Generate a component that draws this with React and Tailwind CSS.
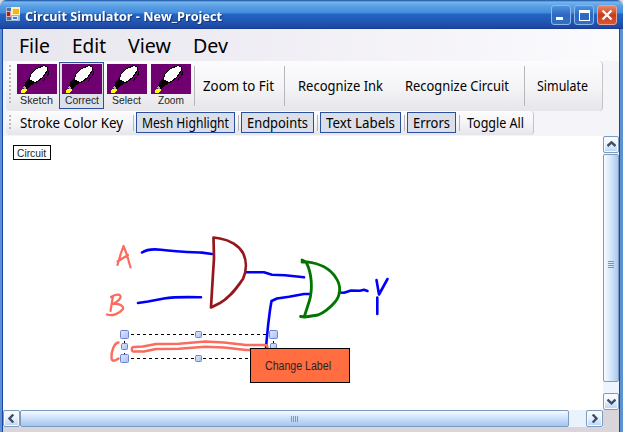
import React from "react";

const sans = "font-['Noto_Sans',sans-serif]";

function Label({ w, className = "", children }) {
  return (
    <svg width={w} height="24" className="block shrink-0 overflow-visible">
      <text x="0" y="17" textLength={w} lengthAdjust="spacingAndGlyphs" className={className}>
        {children}
      </text>
    </svg>
  );
}

function Pen() {
  return (
    <svg width="40" height="30" viewBox="0 0 40 30" className="block bg-[#700070]" shapeRendering="crispEdges">
      <path d="M29.5 3.5L31.5 8.5L30.5 12.5L27.5 14.5L26.5 17.5" fill="none" stroke="#000" strokeWidth="1" />
      <path d="M8 19L12 14L18 18L16 21L14 21L10 26L7 23Z" fill="#000" />
      <path d="M12.5 15.5L13.5 10.5L16.5 7.5L19.5 4.5L27.5 1.5L30.5 3.5L30.5 6.5L25.5 13.5L20.5 17.5L18.5 18.5L15.5 17.5Z" fill="#fff" stroke="#000" strokeWidth="1" />
      <path d="M4 27L5 25L8 24L10 26L8 29L4 29Z" fill="#ff0" />
      <path d="M7 23L9 25" stroke="#a5a5a5" strokeWidth="2" />
    </svg>
  );
}

function Tool({ name, w, active }) {
  return (
    <div className={`flex h-[47px] w-[45px] shrink-0 flex-col items-center border pt-px ${active ? "border-[#2a4f9c] bg-[#dce0eb]" : "border-transparent"}`}>
      <Pen />
      <div className="-mt-[7px] h-[14px]">
        <Label w={w} className="fill-[#252525] font-['Liberation_Sans',sans-serif] text-[11px]">{name}</Label>
      </div>
    </div>
  );
}

function Grip({ n }) {
  return (
    <div className="flex w-[2px] shrink-0 flex-col gap-[2px]">
      {Array.from({ length: n }, (_, i) => <div key={i} className="h-[2px] w-[2px] bg-[#b9b8bd]" />)}
    </div>
  );
}

function Toggle({ name, boxW, w }) {
  return (
    <div className={`flex shrink-0 justify-center border border-[#2a4f9c] bg-[#dbdfea] ${boxW}`}>
      <div className="-mt-[2px] mr-px h-5"><Label w={w} className={`text-[14px] ${sans}`}>{name}</Label></div>
    </div>
  );
}

const Chevron = ({ d }) => (
  <svg width="9" height="9" viewBox="0 0 9 9" className="block"><path d={d} fill="none" stroke="#3f4e66" strokeWidth="2.4" /></svg>
);

const arrowBox = "flex shrink-0 items-center justify-center rounded-[2px] border border-[#7d9cbd] bg-linear-to-b from-white via-[#e6f1fe] to-[#b8d2f3] shadow-[inset_0_0_0_1px_#f6faff]";
const sysBox = "flex h-[20px] w-[20px] items-center justify-center rounded-[3px] border border-[#8cb9eb]";

function Diagram() {
  return (
    <svg width="600" height="274" viewBox="3 136 600 274" className="block" fill="none" strokeLinecap="round" strokeLinejoin="round">
      <g stroke="#0000fa" strokeWidth="2.6">
        <path d="M142 252.5C147 249 153 248.8 161 249.7C174 251.5 188 252 202 252.6L212 254" />
        <path d="M138 303L148 301.5L164 298.5C176 296.5 190 297 201 297.3" />
        <path d="M246 272.3L264 272.3L272 274.7L285 275.3L304 277.3" />
        <path d="M266 347L268 326L270 310L271.5 301L277 298.5L289 296.7L304 294L310 294" />
        <path d="M339 292.5L344 292.7L351 290.5L360 290.7L364 289.7L367.5 291" />
        <path d="M376.5 280L379 294.5L387.5 279M377.3 297.5V314" />
      </g>
      <path d="M213.5 237.5L214 258L212.5 282L211 307.5L220 303C231 297 237 287 243 279C247 270 246.5 260 243 253C239 246 230 240 220 238.5L213.5 237.5" stroke="#95161d" strokeWidth="2.7" />
      <path d="M302 260L306 262C312 273 313 290 309 302L304.5 316M302 262L307 261.8C318 263 330 268 336 278C341 285 341 295 335 302C329 309 323 313 318 315L305 317L300.5 316.5" stroke="#007500" strokeWidth="2.8" />
      <g stroke="#fb6b5e" strokeWidth="2.2">
        <path d="M117.5 265L121 253L123.5 246L127 255L130.5 267.5M117.5 261.5L128 255" />
        <path d="M113 296L110.5 311M111 297C116 293.5 121.5 294 120.5 297.5C119 301 115 303 113 304C119 303 124 306 123 309C119 314 112 316.5 107 314.5" />
        <path d="M118.5 342.5C114 343 111 352 111.5 358C112 362 115 361 118.5 358.5" strokeWidth="2.4" />
      </g>
      <path d="M134 347L143 346.5L156 344L179 343.7L205 341.5L224 342.5L246 345L265 345C268 345 268 349 267 350M134 347C131 347 131 352 134 351.5L144 351.5L156 349L179 348.8L205 346.8L224 347.5L246 350H264" stroke="#fb6b5e" strokeWidth="2.4" />
      <path d="M124.5 334.5H273.5M124.5 358.5H273.5M124.5 334.5V358.5M273.5 334.5V358.5" stroke="#000" strokeDasharray="3 3" strokeLinecap="butt" shapeRendering="crispEdges" />
      <g fill="url(#handle)" stroke="#7184cd">
        <rect x="120.5" y="330.5" width="8" height="8" rx="1" />
        <rect x="269.5" y="330.5" width="8" height="8" rx="1" />
        <rect x="120.5" y="354.5" width="8" height="8" rx="1" />
        <rect x="121.5" y="343.5" width="6" height="6" rx="1" />
        <rect x="195.5" y="331.5" width="6" height="6" rx="1" />
        <rect x="195.5" y="355.5" width="6" height="6" rx="1" />
        <rect x="270.5" y="343.5" width="6" height="6" rx="1" />
      </g>
      <defs>
        <linearGradient id="handle" x2="1" y2="1"><stop stopColor="#e0eaff" /><stop offset="1" stopColor="#a9bdf1" /></linearGradient>
      </defs>
    </svg>
  );
}

export default function App() {
  return (
    <div className="flex h-[432px] w-[623px] flex-col overflow-hidden bg-[#dcd8dc]">
      <header className="flex h-[29px] shrink-0 items-center rounded-tl-[6px] rounded-tr-[6px] border-b border-[#183b94] bg-[linear-gradient(#174a9e_0px,#75b7ee_2px,#5a9fe5_6px,#438bdc_13px,#2265c4_14px,#2158b5_21px,#1d46a1_28px)] pl-[6px] pr-[6px] pt-[3px]">
        <svg width="14" height="14" viewBox="0 0 14 14" className="-mt-[3px] mr-[5px] block" shapeRendering="crispEdges">
          <path d="M0 0H14V14H0Z" fill="#9fb5d2" />
          <path d="M1 1H5V4H1ZM1 10H5V13H1Z" fill="#4870ad" />
          <path d="M0 4H5V10H0Z" fill="#dfb0a7" /><path d="M1 5H4V9H1Z" fill="#b91818" />
          <path d="M5 0H14V8H5Z" fill="#fff1a9" /><path d="M7 2H13V7H7Z" fill="#f4b51c" />
          <path d="M6 9H12V13H6Z" fill="#dce9fb" /><path d="M7 10H11V12H7Z" fill="#3e7bd5" />
        </svg>
        <div className="h-6 [filter:drop-shadow(1px_1px_0_#153878)]">
          <Label w={197} className="fill-white font-['Open_Sans',sans-serif] text-[13px] font-bold">Circuit Simulator - New_Project</Label>
        </div>
        <div className="-mt-px ml-auto flex gap-[3px]">
          <div className={`${sysBox} bg-linear-to-b from-[#5292dd] via-[#2b68bf] to-[#376fc1]`}>
            <div className="mt-[7px] mr-[4px] h-[3px] w-[7px] bg-white" />
          </div>
          <div className={`${sysBox} bg-linear-to-b from-[#5292dd] via-[#2b68bf] to-[#376fc1]`}>
            <div className="h-[11px] w-[11px] border border-t-[3px] border-white" />
          </div>
          <div className={`${sysBox} bg-linear-to-b from-[#e4886b] via-[#ce3910] to-[#d65838] border-[#eaa395]`}>
            <svg width="12" height="12" viewBox="0 0 12 12"><path d="M1.5 1.5L10.5 10.5M10.5 1.5L1.5 10.5" stroke="#fff" strokeWidth="2.3" /></svg>
          </div>
        </div>
      </header>
      <div className="flex min-h-0 flex-1">
        <div className="w-[3px] shrink-0 border-r border-[#1746a6] bg-[#5c91d4]" />
        <main className="flex w-[616px] shrink-0 flex-col bg-white">
          <nav className="flex h-[32px] shrink-0 bg-linear-to-r from-[#e8e6ee] to-[#fbfafd] pl-[16px] pt-[7px]">
            <div className="flex gap-[22px]">
              <Label w={31} className={`text-[20px] ${sans}`}>File</Label>
              <Label w={34} className={`text-[20px] ${sans}`}>Edit</Label>
              <Label w={43} className={`text-[20px] ${sans}`}>View</Label>
              <Label w={35} className={`text-[20px] ${sans}`}>Dev</Label>
            </div>
          </nav>
          <div className="h-[50px] shrink-0 bg-[#f5f4f8] pl-[3px]">
            <div className="flex h-full w-[597px] rounded border-r border-[#c5c3c8] bg-linear-to-b from-[#fcfcfd] via-[#f5f4f7] to-[#e6e5e9] pl-[3px] pt-px">
              <div className="pt-[3px]"><Grip n={10} /></div>
              <div className="ml-[3px] flex w-[179px]">
                <Tool name="Sketch" w={33} /><Tool name="Correct" w={34} active /><Tool name="Select" w={29} />
                <div className="-ml-px"><Tool name="Zoom" w={26} /></div>
              </div>
              <div className="ml-px mt-[4px] h-[40px] w-px bg-[#b7b6bb]" />
              <div className="ml-[8px] mt-[12px]"><Label w={71} className={`text-[14px] ${sans}`}>Zoom to Fit</Label></div>
              <div className="ml-[10px] mt-[4px] h-[40px] w-px bg-[#b7b6bb]" />
              <div className="ml-[13px] mt-[12px] flex gap-[22px]">
                <Label w={85} className={`text-[14px] ${sans}`}>Recognize Ink</Label>
                <Label w={104} className={`text-[14px] ${sans}`}>Recognize Circuit</Label>
              </div>
              <div className="ml-[15px] mt-[4px] h-[40px] w-px bg-[#b7b6bb]" />
              <div className="ml-[12px] mt-[12px]"><Label w={51} className={`text-[14px] ${sans}`}>Simulate</Label></div>
            </div>
          </div>
          <div className="h-[25px] shrink-0 bg-[#f5f4f8] pl-[3px]">
            <div className="flex h-[24px] w-[528px] rounded border-r border-[#c5c3c8] bg-linear-to-b from-[#fcfcfd] via-[#f5f4f7] to-[#e6e5e9] pl-[3px] pt-px">
              <div className="pt-[3px]"><Grip n={4} /></div>
              <div className="-mt-px ml-[9px]"><Label w={103} className={`text-[14px] ${sans}`}>Stroke Color Key</Label></div>
              <div className="ml-[10px] mt-[3px] mr-[2px] h-[16px] w-px shrink-0 bg-[#b7b6bb]" />
              <div className="flex h-[21px]">
                <Toggle name="Mesh Highlight" boxW="w-[99px]" w={87} />
                <div className="ml-[3px] mr-[2px] mt-[3px] h-[16px] w-px shrink-0 bg-[#b7b6bb]" />
                <Toggle name="Endpoints" boxW="w-[73px]" w={61} />
                <div className="ml-[3px] mr-[2px] mt-[3px] h-[16px] w-px shrink-0 bg-[#b7b6bb]" />
                <Toggle name="Text Labels" boxW="w-[81px]" w={69} />
                <div className="ml-[3px] mr-[2px] mt-[3px] h-[16px] w-px shrink-0 bg-[#b7b6bb]" />
                <Toggle name="Errors" boxW="w-[49px]" w={37} />
                <div className="ml-[3px] mr-[7px] mt-[3px] h-[16px] w-px shrink-0 bg-[#b7b6bb]" />
                <div className="-mt-px"><Label w={57} className={`text-[14px] ${sans}`}>Toggle All</Label></div>
              </div>
            </div>
          </div>
          <div className="flex h-[274px] shrink-0">
            <div className="relative w-[600px] shrink-0 bg-white">
              <Diagram />
              <div className="absolute left-[10px] top-[9px] flex h-[15px] w-[38px] justify-center border border-black bg-white">
                <div className="-mt-[6px] mr-px h-4"><Label w={29} className="fill-[#252525] font-['Liberation_Sans',sans-serif] text-[11px]">Circuit</Label></div>
              </div>
              <div className="absolute left-[247px] top-[212px] flex h-[35px] w-[100px] justify-center border border-black bg-[#ff6d40]">
                <div className="-ml-[4px] mt-[4px]"><Label w={66} className="fill-[#252525] font-['Liberation_Sans',sans-serif] text-[12px]">Change Label</Label></div>
              </div>
            </div>
            <div className="flex w-[16px] shrink-0 flex-col bg-[#edf4fd]">
              <div className={`h-[17px] w-[16px] ${arrowBox}`}><Chevron d="M.5 6L4.5 2.3L8.5 6" /></div>
              <div className="mt-px h-[228px] rounded-[2px] border border-[#7d9cbd] bg-linear-to-r from-[#f7fbff] via-[#d4e6fb] to-[#a9c8f0] pt-[106px] pl-[4px]">
                <div className="flex flex-col gap-px">
                  {[0, 1, 2, 3].map(i => <div key={i} className="h-px w-[6px] bg-[#8096b2]" />)}
                </div>
              </div>
              <div className={`mt-auto h-[17px] w-[16px] ${arrowBox}`}><Chevron d="M.5 2.5L4.5 6.3L8.5 2.5" /></div>
            </div>
          </div>
          <div className="flex h-[17px] shrink-0 bg-[#d9d5da]">
            <div className="flex w-[600px] bg-[#e9f2fd]">
              <div className={`h-[17px] w-[17px] ${arrowBox}`}><Chevron d="M6.3 .5L2.5 4.5L6.3 8.5" /></div>
              <div className="flex h-[17px] w-[549px] items-center justify-center rounded-[2px] border border-[#7d9cbd] bg-linear-to-b from-[#f6fbff] via-[#cbdffa] to-[#a5c4ef]">
                <div className="flex gap-px">
                  {[0, 1, 2, 3].map(i => <div key={i} className="h-[6px] w-px bg-[#8096b2]" />)}
                </div>
              </div>
              <div className={`ml-auto h-[17px] w-[17px] ${arrowBox}`}><Chevron d="M2.7 .5L6.5 4.5L2.7 8.5" /></div>
            </div>
          </div>
          <div className="flex-1 bg-[#d9d5da]" />
        </main>
        <div className="w-[4px] shrink-0 border-l border-[#1746a6] bg-[#5c91d4]" />
      </div>
    </div>
  );
}
